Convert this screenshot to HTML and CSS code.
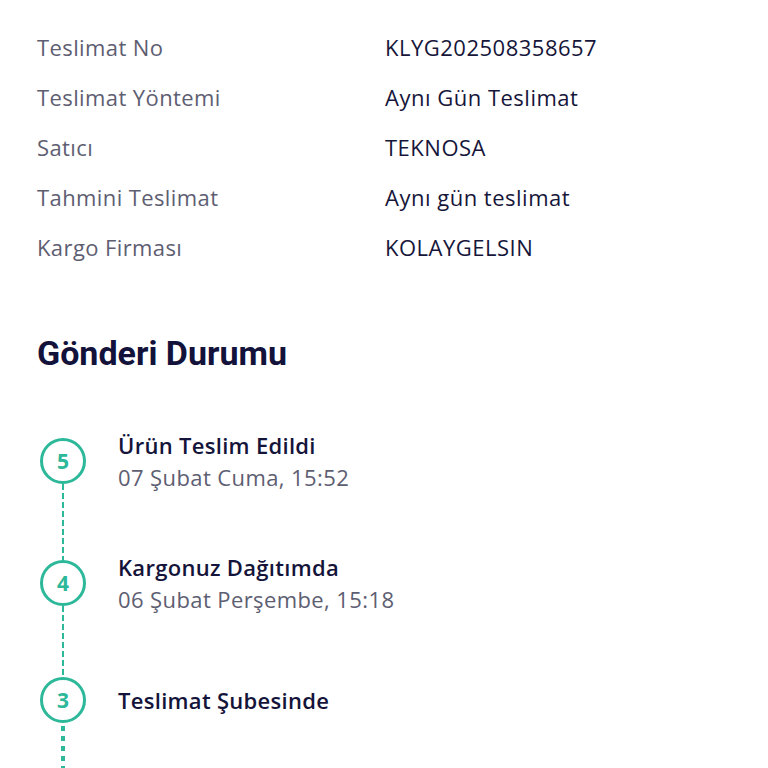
FILE: index.html
```html
<!DOCTYPE html>
<html lang="tr">
<head>
<meta charset="utf-8">
<link rel="stylesheet" href="styles.css">
</head>
<body>
<div class="page">
  <div class="details">
    <div class="label">Teslimat No</div><div class="value">KLYG202508358657</div>
    <div class="label">Teslimat Yöntemi</div><div class="value">Aynı Gün Teslimat</div>
    <div class="label">Satıcı</div><div class="value">TEKNOSA</div>
    <div class="label">Tahmini Teslimat</div><div class="value">Aynı gün teslimat</div>
    <div class="label">Kargo Firması</div><div class="value">KOLAYGELSIN</div>
  </div>
  <h2 class="heading">Gönderi Durumu</h2>
  <div class="timeline">
    <div class="step step-long">
      <div class="rail"><div class="dot">5</div><div class="line dashed"></div></div>
      <div class="info"><div class="title">Ürün Teslim Edildi</div><div class="date">07 Şubat Cuma, 15:52</div></div>
    </div>
    <div class="step step-short">
      <div class="rail"><div class="dot">4</div><div class="line dashed"></div></div>
      <div class="info"><div class="title">Kargonuz Dağıtımda</div><div class="date">06 Şubat Perşembe, 15:18</div></div>
    </div>
    <div class="step step-last">
      <div class="rail"><div class="dot">3</div><div class="line dotted"></div></div>
      <div class="info"><div class="title">Teslimat Şubesinde</div></div>
    </div>
  </div>
</div>
</body>
</html>
```
FILE: styles.css
```css
html, body { margin: 0; padding: 0; background: #fff; }
body { font-family: "Open Sans", "Noto Sans", sans-serif; overflow: hidden; height: 768px; }
.page { padding: 22px 0 0 37px; }
.details { display: grid; grid-template-columns: 348px 1fr; grid-auto-rows: 50px; align-items: center; }
.label { font-size: 22px; letter-spacing: 0.4px; color: #5e5e72; }
.value { font-size: 22px; letter-spacing: 0.5px; color: #16163a; }
.heading { margin: 62px 0 0 0; font-family: Roboto, sans-serif; font-weight: 700; font-size: 34px; line-height: 38px; color: #12123a; }
.timeline { margin-top: 66px; }
.step { display: flex; }
.step-long { height: 122px; }
.step-short { height: 117px; }
.step-last { height: 120px; }
.rail { width: 52px; display: flex; flex-direction: column; align-items: center; }
.dot { width: 40px; height: 40px; border: 3px solid #2cb899; border-radius: 50%; display: flex; align-items: center; justify-content: center; color: #2cb899; font-weight: 700; font-size: 21px; flex: none; }
.line { flex: 1; }
.line.dashed { width: 2px; background: repeating-linear-gradient(to bottom, #2cb899 0 6px, transparent 6px 9px); }
.line.dotted { width: 4px; background: repeating-linear-gradient(to bottom, #2cb899 0 5px, transparent 5px 10px); margin-top: 3px; }
.info { margin-left: 29px; height: 46px; display: flex; flex-direction: column; justify-content: center; }
.title { font-size: 22px; font-weight: 600; letter-spacing: 0.3px; color: #14143a; line-height: 32px; }
.date { font-size: 22px; letter-spacing: 0.4px; color: #5e5e72; line-height: 32px; }
```
